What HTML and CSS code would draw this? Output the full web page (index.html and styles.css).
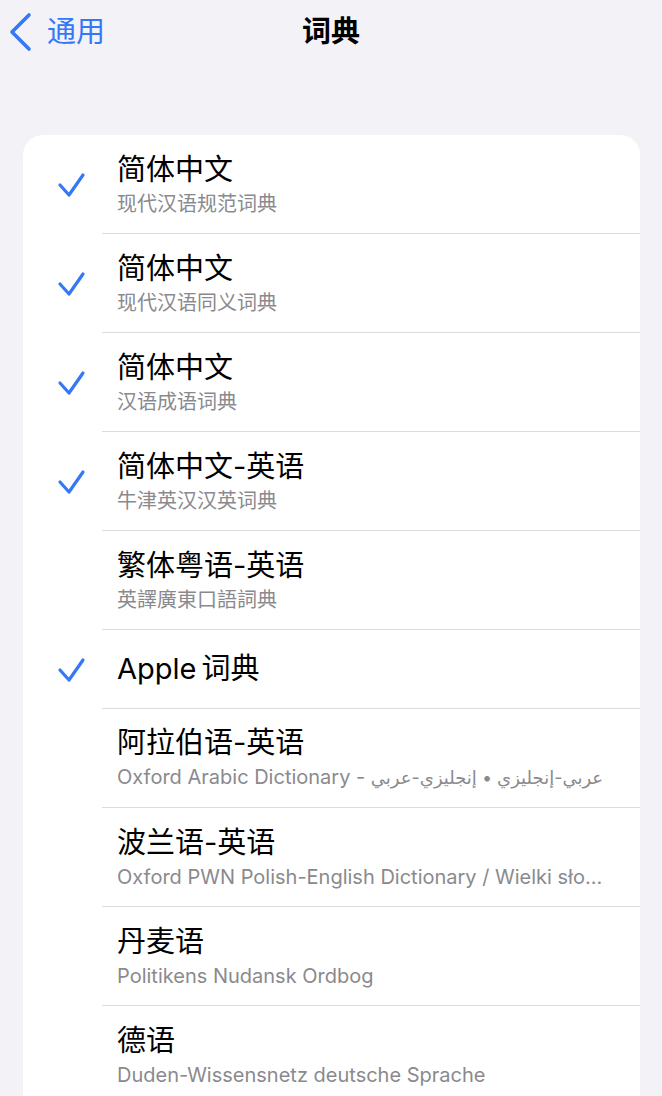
FILE: index.html
```html
<!DOCTYPE html>
<html lang="zh-CN">
<head>
<meta charset="utf-8">
<title>词典</title>
<link rel="stylesheet" href="styles.css">
</head>
<body>
<header class="nav">
  <div class="nav-left">
    <svg class="chev" width="26" height="40" viewBox="0 0 26 40"><path d="M21 3 L4 20 L21 37" fill="none" stroke="#3478f6" stroke-width="3.6" stroke-linecap="round" stroke-linejoin="round"/></svg>
    <span class="back">通用</span>
  </div>
  <h1 class="nav-title">词典</h1>
  <div></div>
</header>

<main class="card">
  <div class="row">
    <div class="check"><svg width="30" height="26" viewBox="0 0 30 26"><path d="M3 13 L12 23 L26 3" fill="none" stroke="#3478f6" stroke-width="3.2" stroke-linecap="round" stroke-linejoin="round"/></svg></div>
    <div class="body"><div class="title">简体中文</div><div class="sub">现代汉语规范词典</div></div>
  </div>
  <div class="row">
    <div class="check"><svg width="30" height="26" viewBox="0 0 30 26"><path d="M3 13 L12 23 L26 3" fill="none" stroke="#3478f6" stroke-width="3.2" stroke-linecap="round" stroke-linejoin="round"/></svg></div>
    <div class="body"><div class="title">简体中文</div><div class="sub">现代汉语同义词典</div></div>
  </div>
  <div class="row">
    <div class="check"><svg width="30" height="26" viewBox="0 0 30 26"><path d="M3 13 L12 23 L26 3" fill="none" stroke="#3478f6" stroke-width="3.2" stroke-linecap="round" stroke-linejoin="round"/></svg></div>
    <div class="body"><div class="title">简体中文</div><div class="sub">汉语成语词典</div></div>
  </div>
  <div class="row">
    <div class="check"><svg width="30" height="26" viewBox="0 0 30 26"><path d="M3 13 L12 23 L26 3" fill="none" stroke="#3478f6" stroke-width="3.2" stroke-linecap="round" stroke-linejoin="round"/></svg></div>
    <div class="body"><div class="title">简体中文-英语</div><div class="sub">牛津英汉汉英词典</div></div>
  </div>
  <div class="row">
    <div class="check"></div>
    <div class="body"><div class="title">繁体粤语-英语</div><div class="sub">英譯廣東口語詞典</div></div>
  </div>
  <div class="row single">
    <div class="check"><svg width="30" height="26" viewBox="0 0 30 26"><path d="M3 13 L12 23 L26 3" fill="none" stroke="#3478f6" stroke-width="3.2" stroke-linecap="round" stroke-linejoin="round"/></svg></div>
    <div class="body"><div class="title tight">Apple 词典</div></div>
  </div>
  <div class="row">
    <div class="check"></div>
    <div class="body"><div class="title">阿拉伯语-英语</div><div class="sub">Oxford Arabic Dictionary - <span class="ar">عربي-إنجليزي • إنجليزي-عربي</span></div></div>
  </div>
  <div class="row">
    <div class="check"></div>
    <div class="body"><div class="title">波兰语-英语</div><div class="sub">Oxford PWN Polish-English Dictionary / Wielki sło...</div></div>
  </div>
  <div class="row">
    <div class="check"></div>
    <div class="body"><div class="title">丹麦语</div><div class="sub">Politikens Nudansk Ordbog</div></div>
  </div>
  <div class="row last">
    <div class="check"></div>
    <div class="body"><div class="title">德语</div><div class="sub">Duden-Wissensnetz deutsche Sprache</div></div>
  </div>
</main>
</body>
</html>
```

FILE: styles.css
```css
* { box-sizing: border-box; }
html, body {
  margin: 0;
  padding: 0;
  background: #f2f2f7;
}
body {
  font-family: Inter, "Noto Sans CJK SC", "DejaVu Sans", sans-serif;
  color: #000;
  width: 662px;
}
.nav {
  height: 64px;
  display: grid;
  grid-template-columns: 1fr auto 1fr;
  align-items: center;
}
.nav-left {
  display: flex;
  align-items: center;
  padding-left: 8px;
  gap: 13px;
}
.chev { display: block; }
.back {
  color: #3478f6;
  font-size: 29px;
  line-height: 34px;
}
.nav-title {
  margin: 0;
  font-size: 29px;
  line-height: 34px;
  font-weight: 700;
}
.card {
  margin: 71px 22px 0 23px;
  background: #fff;
  border-radius: 20px;
  overflow: hidden;
}
.row {
  display: flex;
  align-items: stretch;
}
.check {
  width: 79px;
  flex: none;
  display: flex;
  align-items: center;
  justify-content: center;
  padding-left: 18px;
}
.check svg { display: block; }
.body {
  flex: 1;
  min-width: 0;
  min-height: 99px;
  border-bottom: 1px solid #dcdce0;
  padding: 0 30px 0 15px;
  display: flex;
  flex-direction: column;
  justify-content: center;
  gap: 5px;
}
.row.single .body { min-height: 79px; }
.row.last .body {
  min-height: 132px;
  padding-bottom: 33px;
  border-bottom: none;
}
.title {
  font-size: 29px;
  line-height: 34px;
  white-space: nowrap;
}
.title.tight { word-spacing: -3px; }
.sub {
  font-size: 20px;
  line-height: 24px;
  color: #8a8a8e;
  white-space: nowrap;
  overflow: hidden;
}
.ar {
  font-size: 18px;
}
```
